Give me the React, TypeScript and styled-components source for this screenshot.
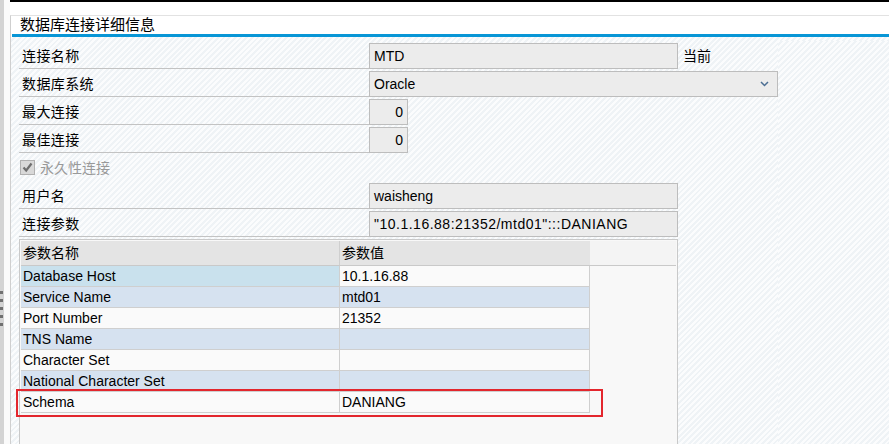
import React from 'react';
import styled, { createGlobalStyle } from 'styled-components';

const GlobalStyle = createGlobalStyle`
  html, body {
    margin: 0;
    padding: 0;
    background: #fff;
    overflow: hidden;
  }
`;

const hatch = `repeating-linear-gradient(135deg, #fbfcfd 0px, #fbfcfd 2px, #eff3f6 2px, #eff3f6 4px)`;

const Shell = styled.div`
  display: flex;
  width: 889px;
  height: 444px;
  overflow: hidden;
  background: #fff;
  font-family: 'Liberation Sans', 'Noto Sans CJK SC', sans-serif;
  font-size: 14px;
  color: #000;
`;

const LeftBar = styled.div`
  width: 4px;
  flex-shrink: 0;
  background: #d3d3d3;
  display: flex;
  flex-direction: column;
  gap: 5px;
  padding-top: 291px;
  box-sizing: border-box;
`;

const GripDot = styled.div`
  width: 3px;
  height: 3px;
  background: #707070;
`;

const Gutter = styled.div`
  width: 6px;
  flex-shrink: 0;
  background: #fafafa;
`;

const Main = styled.div`
  flex: 1;
  min-width: 0;
  display: flex;
  flex-direction: column;
`;

const TopStrip = styled.div`
  height: 13px;
  border-top: 2px solid #000;
  background: #fff;
`;

const Panel = styled.div`
  flex: 1;
  min-height: 0;
  display: flex;
  flex-direction: column;
  border-left: 1px solid #cfcfcf;
  border-top: 1px solid #e2e2e2;
`;

const TitleBar = styled.div`
  height: 18px;
  line-height: 18px;
  padding-left: 9px;
  font-size: 15px;
  background: #fff;
`;

const BlueRule = styled.div`
  height: 3px;
  margin-left: 1px;
  background: #0896d6;
`;

const Body = styled.div`
  flex: 1;
  min-height: 0;
  display: flex;
  flex-direction: column;
  padding: 4px 0 0 8px;
  background: ${hatch};
`;

const FormRow = styled.div`
  display: flex;
  align-items: flex-start;
  height: 28px;
  flex-shrink: 0;
`;

const Label = styled.div`
  width: 350px;
  height: 28px;
  box-sizing: border-box;
  border-bottom: 1px solid #c3c3c3;
  padding: 4px 0 0 3px;
  line-height: 22px;
  letter-spacing: 0.4px;
`;

const Field = styled.div<{ $width: number; $right?: boolean; $spread?: boolean }>`
  width: ${(p) => p.$width}px;
  height: 26px;
  margin-top: 2px;
  box-sizing: border-box;
  border: 1px solid #bdbdbd;
  background: #ececec;
  padding: 0 4px;
  line-height: 24px;
  text-align: ${(p) => (p.$right ? 'right' : 'left')};
  letter-spacing: ${(p) => (p.$spread ? '0.5px' : 'normal')};
  white-space: nowrap;
`;

const Dropdown = styled(Field)`
  display: flex;
  align-items: center;
  justify-content: space-between;
  padding-right: 8px;
`;

const Aside = styled.div`
  margin: 2px 0 0 5px;
  line-height: 26px;
`;

const CheckRow = styled.div`
  height: 28px;
  flex-shrink: 0;
  display: flex;
  align-items: center;
  gap: 5px;
  padding-left: 1px;
  color: #999;
`;

const CheckBox = styled.div`
  width: 15px;
  height: 15px;
  box-sizing: border-box;
  border: 1px solid #b0b0b0;
  background: #d8d8d8;
  display: flex;
  align-items: center;
  justify-content: center;
`;

const Table = styled.div`
  position: relative;
  margin-top: 2px;
  margin-bottom: -4px;
  width: 659px;
  flex: 1;
  box-sizing: border-box;
  border: 1px solid #c9c9c9;
  padding: 1px;
  background: #f8f8f8;
  display: flex;
  flex-direction: column;
`;

const HeaderRow = styled.div`
  display: flex;
  height: 25px;
  box-sizing: border-box;
  border-bottom: 1px solid #c9c9c9;
`;

const HeadCell = styled.div<{ $width: number; $last?: boolean }>`
  width: ${(p) => p.$width}px;
  box-sizing: border-box;
  background: #e4e4e4;
  border-right: 1px solid ${(p) => (p.$last ? '#e4e4e4' : '#cfcfcf')};
  padding-left: 2px;
  line-height: 24px;
`;

const HeadFill = styled.div`
  flex: 1;
  background: #f4f4f4;
`;

const DataRow = styled.div`
  display: flex;
  width: 569px;
  height: 21px;
  box-sizing: border-box;
  border-bottom: 1px solid #cfcfcf;
`;

const Cell = styled.div<{ $width: number; $bg: string }>`
  width: ${(p) => p.$width}px;
  box-sizing: border-box;
  border-right: 1px solid #cfcfcf;
  background: ${(p) => p.$bg};
  padding-left: 2px;
  line-height: 20px;
  white-space: nowrap;
`;

// red annotation box drawn over the Schema row
const Highlight = styled.div`
  position: absolute;
  left: -4px;
  top: 149px;
  width: 587px;
  height: 28px;
  box-sizing: border-box;
  border: 2px solid #e3262d;
  pointer-events: none;
`;

const Filler = styled.div`
  flex: 1;
  background: ${hatch};
`;

const Content = styled.div`
  display: flex;
  flex: 1;
  min-height: 0;
`;

const Column = styled.div`
  display: flex;
  flex-direction: column;
`;

type Param = { name: string; value: string };

const params: Param[] = [
  { name: 'Database Host', value: '10.1.16.88' },
  { name: 'Service Name', value: 'mtd01' },
  { name: 'Port Number', value: '21352' },
  { name: 'TNS Name', value: '' },
  { name: 'Character Set', value: '' },
  { name: 'National Character Set', value: '' },
  { name: 'Schema', value: 'DANIANG' },
];

const white = '#fafafa';
const blue = '#d6e2f0';

const rowBg = (i: number) => (i % 2 === 1 ? blue : white);

export default function App() {
  return (
    <>
      <GlobalStyle />
      <Shell>
        <LeftBar>
          {[0, 1, 2, 3, 4].map((i) => (
            <GripDot key={i} />
          ))}
        </LeftBar>
        <Gutter />
        <Main>
          <TopStrip />
          <Panel>
            <TitleBar>数据库连接详细信息</TitleBar>
            <BlueRule />
            <Body>
              <Content>
                <Column>
                  <FormRow>
                    <Label>连接名称</Label>
                    <Field $width={309}>MTD</Field>
                    <Aside>当前</Aside>
                  </FormRow>
                  <FormRow>
                    <Label>数据库系统</Label>
                    <Dropdown $width={409}>
                      <span>Oracle</span>
                      <svg width="9" height="6" viewBox="0 0 9 6">
                        <path d="M1 1 L4.5 4.5 L8 1" fill="none" stroke="#4b6e93" strokeWidth="1.5" />
                      </svg>
                    </Dropdown>
                  </FormRow>
                  <FormRow>
                    <Label>最大连接</Label>
                    <Field $width={39} $right>
                      0
                    </Field>
                  </FormRow>
                  <FormRow>
                    <Label>最佳连接</Label>
                    <Field $width={39} $right>
                      0
                    </Field>
                  </FormRow>
                  <CheckRow>
                    <CheckBox>
                      <svg width="11" height="11" viewBox="0 0 11 11">
                        <path d="M1.5 5.5 L4.2 8.5 L9.5 1.5" fill="none" stroke="#6e6e6e" strokeWidth="2.2" />
                      </svg>
                    </CheckBox>
                    永久性连接
                  </CheckRow>
                  <FormRow>
                    <Label>用户名</Label>
                    <Field $width={309}>waisheng</Field>
                  </FormRow>
                  <FormRow>
                    <Label>连接参数</Label>
                    <Field $width={309} $spread>
                      "10.1.16.88:21352/mtd01":::DANIANG
                    </Field>
                  </FormRow>
                  <Table>
                    <HeaderRow>
                      <HeadCell $width={319}>参数名称</HeadCell>
                      <HeadCell $width={250} $last>
                        参数值
                      </HeadCell>
                      <HeadFill />
                    </HeaderRow>
                    {params.map((p, i) => (
                      <DataRow key={p.name}>
                        <Cell $width={319} $bg={i === 0 ? '#c9e1ed' : rowBg(i)}>
                          {p.name}
                        </Cell>
                        <Cell $width={250} $bg={rowBg(i)}>
                          {p.value}
                        </Cell>
                      </DataRow>
                    ))}
                    <Highlight />
                  </Table>
                </Column>
                <Filler />
              </Content>
            </Body>
          </Panel>
        </Main>
      </Shell>
    </>
  );
}
